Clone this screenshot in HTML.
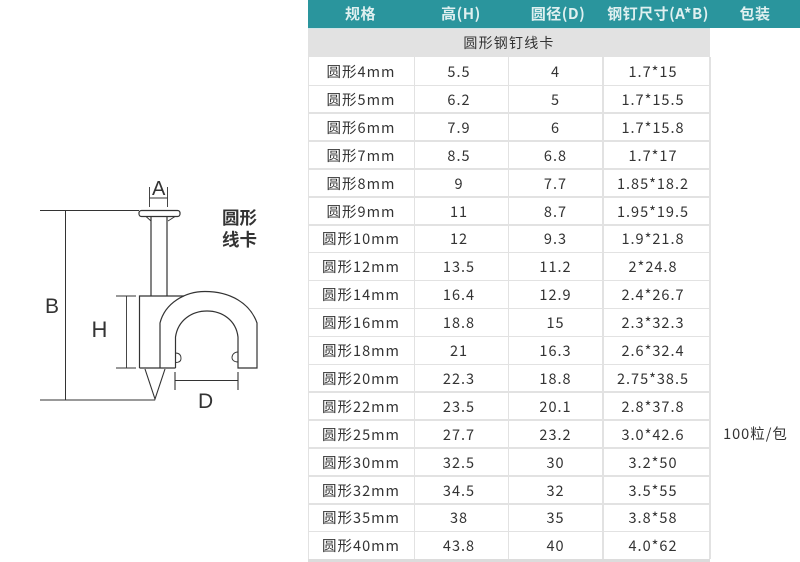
<!DOCTYPE html>
<html><head><meta charset="utf-8">
<style>
html,body{margin:0;padding:0;background:#fff}
#p{position:relative;width:800px;height:562px;overflow:hidden;background:#fff;font-family:"Noto Sans CJK SC","Liberation Sans",sans-serif;color:#333}
.hd{position:absolute;left:308px;top:0;width:492px;height:28px;background:#2a959d}
.hd div{position:absolute;top:0;height:28px;line-height:27px;text-align:center;color:#dff0f0;font-size:15px;font-weight:bold;letter-spacing:.5px;white-space:nowrap}
.sub{position:absolute;left:308px;top:29px;width:402px;height:28px;background:#e2e2e2;text-align:center;line-height:28px;font-size:14px;letter-spacing:1.200px;color:#333}
.l{position:absolute;background:#e2e2e2}
.h{left:308px;width:402px;height:1.500px}
.v{top:57px;height:502px}
.r{position:absolute;left:0;width:800px;height:28px;line-height:28px;font-size:14.500px;letter-spacing:1px;color:#333;white-space:nowrap}
.r span{position:absolute;top:0;text-align:center}
.a{left:308px;width:106px}.b{left:412px;width:94px}.c{left:509px;width:93px}.d{left:604px;width:98px}
</style></head><body>
<div id="p">
<svg width="300" height="562" style="position:absolute;left:0;top:0" fill="none" stroke="#333" stroke-width="1">
<path d="M40 210.500H139M40 400H155M65.500 210V400"/>
<path d="M149.500 187V207M167.500 187V207M149.500 198H167.500" stroke-width=".9"/>
<rect x="139" y="210.500" width="41" height="6" rx="2.500" stroke-width="1.200"/>
<path d="M146 216.500L151 221M175 216.500L168 221" stroke-width=".9"/>
<path d="M151 217V296M167 217V296" stroke-width="1.200"/>
<path d="M116 296H136M116 368H136M126.500 296V368" stroke-width=".9"/>
<path d="M139.500 368V296H184" stroke-width="1.200"/>
<path d="M139.500 368H175.500" stroke-width="1.200"/>
<path d="M160 368V323C165 303 185 291.500 205 291.500C230 291.500 250 303 257 323V368H238V337C236 320 222 311 207 311C192 311 178 320 175.500 337V368" stroke-width="1.200"/>
<path d="M175.500 353C180 353 181 356 181 358.500C181 361 179 362.500 175.500 362.500M238 352C234 352 232 355 232 357.500C232 360 234 362 238 362" stroke-width=".9"/>
<path d="M145 369L155 399L165 369" stroke-width="1.100"/>
<path d="M175 372V390M238 372V390M175 380.500H238" stroke-width="1.100"/>
<g font-family="Liberation Sans" fill="#333" stroke="none">
<text x="45" y="313" font-size="21">B</text>
<text x="91.500" y="337" font-size="22">H</text>
<text x="152" y="195" font-size="20">A</text>
<text x="198" y="408" font-size="21">D</text>
</g>
<g font-family="Noto Sans CJK SC,Liberation Sans" font-weight="bold" font-size="17.500" fill="#333" stroke="none">
<text x="222" y="224">圆形</text>
<text x="222" y="246">线卡</text>
</g>
</svg>
<div class="hd">
<div style="left:0;width:105px">规格</div>
<div style="left:106px;width:94px">高(H)</div>
<div style="left:203px;width:94px">圆径(D)</div>
<div style="left:290px;width:120px">钢钉尺寸(A*B)</div>
<div style="left:402px;width:90px">包装</div>
</div>
<div class="sub">圆形钢钉线卡</div>
<div class="l" style="left:308px;top:28px;width:402px;height:1px;background:#cfe3e6"></div>
<div class="l" style="left:308px;top:559px;width:402px;height:3px;background:#dcdcdc"></div>
<div class="l v" style="left:308px;width:1px"></div>
<div class="l v" style="left:414px;width:1px"></div>
<div class="l v" style="left:508px;width:1px"></div>
<div class="l v" style="left:602px;width:2px"></div>
<div class="l v" style="left:709px;width:2px"></div>
<div class="l h" style="top:84.500px"></div>
<div class="l h" style="top:112.400px"></div>
<div class="l h" style="top:140.300px"></div>
<div class="l h" style="top:168.200px"></div>
<div class="l h" style="top:196.100px"></div>
<div class="l h" style="top:224px"></div>
<div class="l h" style="top:251.900px"></div>
<div class="l h" style="top:279.800px"></div>
<div class="l h" style="top:307.700px"></div>
<div class="l h" style="top:335.600px"></div>
<div class="l h" style="top:363.500px"></div>
<div class="l h" style="top:391.400px"></div>
<div class="l h" style="top:419.300px"></div>
<div class="l h" style="top:447.200px"></div>
<div class="l h" style="top:475.100px"></div>
<div class="l h" style="top:503px"></div>
<div class="l h" style="top:530.900px"></div>
<div class="r" style="top:58px"><span class="a">圆形4mm</span><span class="b">5.5</span><span class="c">4</span><span class="d">1.7*15</span></div>
<div class="r" style="top:85.900px"><span class="a">圆形5mm</span><span class="b">6.2</span><span class="c">5</span><span class="d">1.7*15.5</span></div>
<div class="r" style="top:113.800px"><span class="a">圆形6mm</span><span class="b">7.9</span><span class="c">6</span><span class="d">1.7*15.8</span></div>
<div class="r" style="top:141.700px"><span class="a">圆形7mm</span><span class="b">8.5</span><span class="c">6.8</span><span class="d">1.7*17</span></div>
<div class="r" style="top:169.600px"><span class="a">圆形8mm</span><span class="b">9</span><span class="c">7.7</span><span class="d">1.85*18.2</span></div>
<div class="r" style="top:197.500px"><span class="a">圆形9mm</span><span class="b">11</span><span class="c">8.7</span><span class="d">1.95*19.5</span></div>
<div class="r" style="top:225.400px"><span class="a">圆形10mm</span><span class="b">12</span><span class="c">9.3</span><span class="d">1.9*21.8</span></div>
<div class="r" style="top:253.300px"><span class="a">圆形12mm</span><span class="b">13.5</span><span class="c">11.2</span><span class="d">2*24.8</span></div>
<div class="r" style="top:281.200px"><span class="a">圆形14mm</span><span class="b">16.4</span><span class="c">12.9</span><span class="d">2.4*26.7</span></div>
<div class="r" style="top:309.100px"><span class="a">圆形16mm</span><span class="b">18.8</span><span class="c">15</span><span class="d">2.3*32.3</span></div>
<div class="r" style="top:337px"><span class="a">圆形18mm</span><span class="b">21</span><span class="c">16.3</span><span class="d">2.6*32.4</span></div>
<div class="r" style="top:364.900px"><span class="a">圆形20mm</span><span class="b">22.3</span><span class="c">18.8</span><span class="d">2.75*38.5</span></div>
<div class="r" style="top:392.800px"><span class="a">圆形22mm</span><span class="b">23.5</span><span class="c">20.1</span><span class="d">2.8*37.8</span></div>
<div class="r" style="top:420.700px"><span class="a">圆形25mm</span><span class="b">27.7</span><span class="c">23.2</span><span class="d">3.0*42.6</span></div>
<div class="r" style="top:448.600px"><span class="a">圆形30mm</span><span class="b">32.5</span><span class="c">30</span><span class="d">3.2*50</span></div>
<div class="r" style="top:476.500px"><span class="a">圆形32mm</span><span class="b">34.5</span><span class="c">32</span><span class="d">3.5*55</span></div>
<div class="r" style="top:504.400px"><span class="a">圆形35mm</span><span class="b">38</span><span class="c">35</span><span class="d">3.8*58</span></div>
<div class="r" style="top:532.300px"><span class="a">圆形40mm</span><span class="b">43.8</span><span class="c">40</span><span class="d">4.0*62</span></div>
<div class="r" style="top:419.500px"><span style="left:711px;width:89px;text-align:center">100粒/包</span></div>
</div>
</body></html>
